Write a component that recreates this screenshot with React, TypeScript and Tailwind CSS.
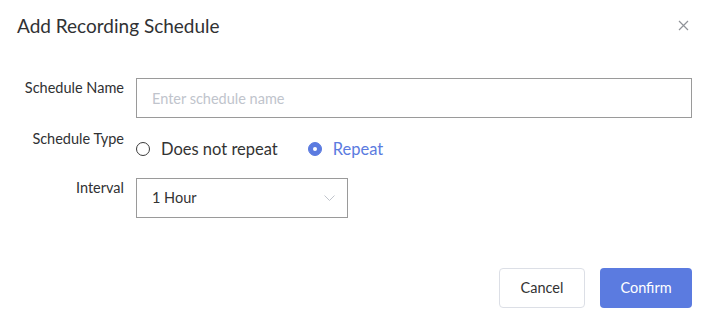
import React, { useState } from 'react';

const font = { fontFamily: '"Lato", "Noto Sans", sans-serif' };

export default function App() {
  const [repeat, setRepeat] = useState(true);

  return (
    <div className="w-[705px] h-[322px] bg-white text-[#303133]" style={font}>
      {/* Header */}
      <div className="flex h-[50px] items-center justify-between pl-[17px] pr-[16px]">
        <h2 className="text-[19px] leading-none">Add Recording Schedule</h2>
        <button type="button" className="text-[#909399]">
          <svg width="11" height="11" viewBox="0 0 11 11" fill="none" stroke="currentColor" strokeWidth="1.2">
            <path d="M1 1L10 10M10 1L1 10" />
          </svg>
        </button>
      </div>

      {/* Form */}
      <div className="pt-[28px] pr-[13px]">
        <div className="flex h-[40px]">
          <label className="w-[124px] shrink-0 text-right text-[14.5px] leading-[20px]">Schedule Name</label>
          <input
            className="ml-[12px] h-[40px] flex-1 border border-[#9a9a9a] px-[15px] text-[14.5px] outline-none placeholder:text-[#c0c4cc]"
            placeholder="Enter schedule name"
          />
        </div>

        <div className="mt-[11px] flex h-[40px]">
          <label className="w-[124px] shrink-0 text-right text-[14.5px] leading-[20px]">Schedule Type</label>
          <div className="ml-[12px] flex items-center gap-[30px]">
            <button type="button" className="flex items-center gap-[11px]" onClick={() => setRepeat(false)}>
              <span
                className={`flex h-[14px] w-[14px] items-center justify-center rounded-full border ${
                  repeat ? 'border-[#3a3a3a] bg-white' : 'border-[#5b7be0] bg-[#5b7be0]'
                }`}
              >
                {!repeat && <span className="h-[4px] w-[4px] rounded-full bg-white" />}
              </span>
              <span className={`text-[16.5px] ${repeat ? 'text-[#333]' : 'text-[#5b7be0]'}`}>Does not repeat</span>
            </button>
            <button type="button" className="flex items-center gap-[11px]" onClick={() => setRepeat(true)}>
              <span
                className={`flex h-[14px] w-[14px] items-center justify-center rounded-full border ${
                  repeat ? 'border-[#5b7be0] bg-[#5b7be0]' : 'border-[#3a3a3a] bg-white'
                }`}
              >
                {repeat && <span className="h-[4px] w-[4px] rounded-full bg-white" />}
              </span>
              <span className={`text-[16.5px] ${repeat ? 'text-[#5b7be0]' : 'text-[#333]'}`}>Repeat</span>
            </button>
          </div>
        </div>

        <div className="mt-[9px] flex h-[40px]">
          <label className="w-[124px] shrink-0 text-right text-[14.5px] leading-[20px]">Interval</label>
          <div className="ml-[12px] flex h-[40px] w-[212px] items-center justify-between border border-[#9a9a9a] pl-[15px] pr-[12px]">
            <span className="text-[14.5px] text-[#333]">1 Hour</span>
            <svg width="11" height="6" viewBox="0 0 11 6" fill="none" stroke="#c0c4cc" strokeWidth="1">
              <path d="M0.5 0.5L5.5 5.5L10.5 0.5" />
            </svg>
          </div>
        </div>
      </div>

      {/* Footer */}
      <div className="mt-[50px] flex justify-end gap-[15px] pr-[13px]">
        <button
          type="button"
          className="h-[40px] w-[86px] rounded-[4px] border border-[#dcdfe6] bg-white text-[14.5px] text-[#333]"
        >
          Cancel
        </button>
        <button
          type="button"
          className="h-[40px] w-[92px] rounded-[4px] bg-[#5b7be0] text-[14.5px] text-white"
        >
          Confirm
        </button>
      </div>
    </div>
  );
}
